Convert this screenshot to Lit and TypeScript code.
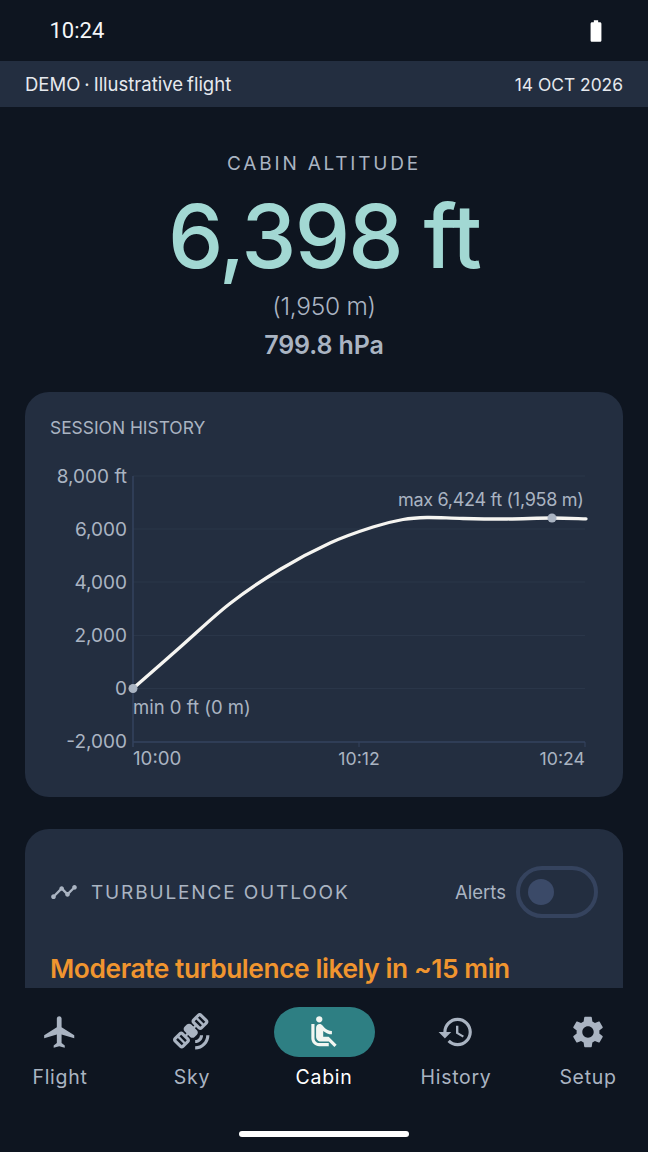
import { LitElement, html, css, svg } from "lit";
import { customElement } from "lit/decorators.js";

const ICONS: Record<string, string> = {
  flight: "M21 16v-2l-8-5V3.5c0-.83-.67-1.5-1.5-1.5S10 2.67 10 3.5V9l-8 5v2l8-2.5V19l-2 1.5V22l3.5-1 3.5 1v-1.5L13 19v-5.5l8 2.5z",
  sky: "M15.44.59l-3.18 3.18c-.78.78-.78 2.05 0 2.83l1.24 1.24-.71.71-1.24-1.25c-.78-.78-2.05-.78-2.83 0L7.3 8.72c-.78.78-.78 2.05 0 2.83l1.24 1.24-.71.71-1.23-1.25c-.78-.78-2.05-.78-2.83 0L.59 15.43c-.78.78-.78 2.05 0 2.83l3.54 3.54c.78.78 2.05.78 2.83 0l3.18-3.18c.78-.78.78-2.05 0-2.83L8.9 14.55l.71-.71 1.24 1.24c.78.78 2.05.78 2.83 0l1.41-1.41c.78-.78.78-2.05 0-2.83L13.84 9.6l.71-.71 1.24 1.24c.78.78 2.05.78 2.83 0l3.18-3.18c.78-.78.78-2.05 0-2.83L18.26.58c-.78-.78-2.04-.78-2.82.01zM6.6 19.32l-1.06 1.06L2 16.85l1.06-1.06 3.54 3.53zm2.12-2.12l-1.06 1.06-3.54-3.54 1.06-1.06 3.54 3.54zm9.54-9.54l-1.06 1.06-3.54-3.54 1.06-1.06 3.54 3.54zm2.12-2.12L19.32 6.6l-3.54-3.54L16.85 2l3.53 3.54zM14 21v2c4.97 0 9-4.03 9-9h-2c0 3.87-3.13 7-7 7zm0-4v2c2.76 0 5-2.24 5-5h-2c0 1.66-1.34 3-3 3z",
  cabin: "M7.59 5.41c-.78-.78-.78-2.05 0-2.83.78-.78 2.05-.78 2.83 0 .78.78.78 2.05 0 2.83-.79.79-2.05.79-2.83 0zM6 16V7H4v9c0 2.76 2.24 5 5 5h6v-2H9c-1.66 0-3-1.34-3-3zm14 4.07L14.93 15H11.5v-3.68c1.4 1.15 3.6 2.16 5.5 2.16v-2.16c-1.66.02-3.61-.87-4.67-2.04l-1.4-1.55c-.19-.21-.43-.38-.69-.5-.29-.14-.62-.23-.96-.23h-.03C8.01 7 7 8.01 7 9.25V15c0 1.66 1.34 3 3 3h5.07l3.5 3.5L20 20.07z",
  history: "M13 3c-4.97 0-9 4.03-9 9H1l3.89 3.89.07.14L9 12H6c0-3.87 3.13-7 7-7s7 3.13 7 7-3.13 7-7 7c-1.93 0-3.68-.79-4.94-2.06l-1.42 1.42C8.27 19.99 10.51 21 13 21c4.97 0 9-4.03 9-9s-4.03-9-9-9zm-1 5v5l4.28 2.54.72-1.21-3.5-2.08V8H12z",
  setup: "M19.14 12.94c.04-.3.06-.61.06-.94 0-.32-.02-.64-.07-.94l2.03-1.58c.18-.14.23-.41.12-.61l-1.92-3.32c-.12-.22-.37-.29-.59-.22l-2.39.96c-.5-.38-1.03-.7-1.62-.94l-.36-2.54c-.04-.24-.24-.41-.48-.41h-3.84c-.24 0-.43.17-.47.41l-.36 2.54c-.59.24-1.13.57-1.62.94l-2.39-.96c-.22-.08-.47 0-.59.22L2.74 8.87c-.12.21-.08.47.12.61l2.03 1.58c-.05.3-.09.63-.09.94s.02.64.07.94l-2.03 1.58c-.18.14-.23.41-.12.61l1.92 3.32c.12.22.37.29.59.22l2.39-.96c.5.38 1.03.7 1.62.94l.36 2.54c.05.24.24.41.48.41h3.84c.24 0 .44-.17.47-.41l.36-2.54c.59-.24 1.13-.56 1.62-.94l2.39.96c.22.08.47 0 .59-.22l1.92-3.32c.12-.22.07-.47-.12-.61l-2.01-1.58zM12 15.6c-1.98 0-3.6-1.62-3.6-3.6s1.62-3.6 3.6-3.6 3.6 1.62 3.6 3.6-1.62 3.6-3.6 3.6z",
  timeline: "M23 8c0 1.1-.9 2-2 2-.18 0-.35-.02-.51-.07l-3.56 3.55c.05.16.07.34.07.52 0 1.1-.9 2-2 2s-2-.9-2-2c0-.18.02-.36.07-.52l-2.55-2.55c-.16.05-.34.07-.52.07s-.36-.02-.52-.07l-4.55 4.56c.05.16.07.33.07.51 0 1.1-.9 2-2 2s-2-.9-2-2 .9-2 2-2c.18 0 .35.02.51.07l4.56-4.55C8.02 9.36 8 9.18 8 9c0-1.1.9-2 2-2s2 .9 2 2c0 .18-.02.36-.07.52l2.55 2.55c.16-.05.34-.07.52-.07s.36.02.52.07l3.55-3.56C19.02 8.35 19 8.18 19 8c0-1.1.9-2 2-2s2 .9 2 2z",
  battery: "M15.67 4H14V2h-4v2H8.33C7.6 4 7 4.6 7 5.33v15.33C7 21.4 7.6 22 8.33 22h7.33c.74 0 1.34-.6 1.34-1.33V5.33C17 4.6 16.4 4 15.67 4z",
};

const icon = (n: string, cls = "") =>
  html`<svg class=${cls} viewBox="0 0 24 24" fill="currentColor"><path d=${ICONS[n]}></path></svg>`;

const NAV = [
  { k: "flight", l: "Flight" },
  { k: "sky", l: "Sky" },
  { k: "cabin", l: "Cabin", active: true },
  { k: "history", l: "History" },
  { k: "setup", l: "Setup" },
];

const GRID = [16, 69, 122, 175.5, 228.5];
const YL: [string, number][] = [
  ["8,000 ft", 22.5],
  ["6,000", 75.5],
  ["4,000", 128.5],
  ["2,000", 182],
  ["0", 235],
  ["-2,000", 288],
];

const CURVE: [number, number][] = [
  [108, 228.5], [157, 185.5], [205, 143.5], [255, 109.5], [305, 83], [348, 67],
  [378, 59.5], [402, 57.5], [438, 58.5], [482, 59], [527, 58], [561, 58.8],
];

function smooth(p: [number, number][]): string {
  let d = `M${p[0][0]} ${p[0][1]}`;
  for (let i = 0; i < p.length - 1; i++) {
    const a = p[Math.max(0, i - 1)], b = p[i], c = p[i + 1], e = p[Math.min(p.length - 1, i + 2)];
    const c1x = b[0] + (c[0] - a[0]) / 6, c1y = b[1] + (c[1] - a[1]) / 6;
    const c2x = c[0] - (e[0] - b[0]) / 6, c2y = c[1] - (e[1] - b[1]) / 6;
    d += ` C${c1x.toFixed(1)} ${c1y.toFixed(1)} ${c2x.toFixed(1)} ${c2y.toFixed(1)} ${c[0]} ${c[1]}`;
  }
  return d;
}

@customElement("app-root")
export class AppRoot extends LitElement {
  static styles = css`
    :host { display: block; width: 648px; height: 1152px; background: #0e1520; overflow: hidden;
      font-family: Inter, "Open Sans", sans-serif; color: #fff; }
    .shell { display: flex; flex-direction: column; height: 1152px; }
    .status { height: 61px; flex: none; display: flex; align-items: center; justify-content: space-between;
      padding: 0 39px 0 49.5px; font-family: Roboto, sans-serif; font-size: 22px; color: #f4f6f8; box-sizing: border-box; }
    .batt { width: 26px; height: 26px; color: #fff; display: block; }
    .banner { height: 46px; flex: none; background: #232e40; display: flex; align-items: center; justify-content: space-between;
      padding: 0 25px; font-size: 18.5px; word-spacing: -1.2px; color: #e6e9ee; box-sizing: border-box; }
    .banner .date { font-size: 17.4px; word-spacing: 0; }
    .main { flex: 1; min-height: 0; overflow: hidden; padding: 0 25px; box-sizing: border-box; }
    .hero { display: flex; flex-direction: column; align-items: center; padding-top: 45px; height: 285px; box-sizing: border-box; }
    .hero .lab { font-size: 19px; letter-spacing: 2.8px; color: #aab4c2; line-height: 24px; }
    .hero .val { font-size: 88px; font-weight: 500; color: #a2d8d3; line-height: 96px; margin-top: 12px; letter-spacing: -1.8px; }
    .hero .m { font-size: 24.5px; color: #aab4c2; font-weight: 300; letter-spacing: -0.3px; line-height: 30px; margin-top: 7px; }
    .hero .hpa { font-size: 25px; color: #aab4c2; font-weight: 600; letter-spacing: -0.1px; line-height: 32px; margin-top: 8px; }
    .card { background: #232e40; border-radius: 24px; box-sizing: border-box; }
    .chart { height: 405px; padding: 25px 0 0; }
    .chart h3 { margin: 0 0 0 25px; font-size: 17.4px; font-weight: 400; color: #aab4c2; line-height: 22px; }
    .chart svg { display: block; margin-top: 21px; }
    .chart text { font-family: Inter, sans-serif; fill: #aab4c2; }
    .chart .yl { font-size: 19px; }
    .chart .tl { font-size: 18.7px; }
    .chart .tn { font-size: 17.7px; }
    .chart .mn { font-size: 18.5px; }
    .chart .mx { font-size: 18px; letter-spacing: -0.3px; }
    .turb { margin-top: 32px; height: 300px; padding: 37px 26px 0 25px; }
    .thead { display: flex; align-items: center; height: 52px; }
    .thead .ti { width: 28px; height: 28px; color: #aab4c2; margin-right: 13px; }
    .thead .tt { font-size: 19px; letter-spacing: 1.85px; color: #aab4c2; flex: 1; }
    .thead .al { font-size: 18.5px; color: #aab4c2; margin-right: 10px; }
    .sw { width: 82px; height: 52px; border: 4px solid #35435e; border-radius: 26px; box-sizing: border-box; display: flex; align-items: center; padding-left: 8px; margin-right: -1px; }
    .sw i { width: 26px; height: 26px; border-radius: 50%; background: #3b4a68; display: block; }
    .warn { margin-top: 34px; font-size: 26.3px; font-weight: 600; color: #f0952f; letter-spacing: -0.4px; line-height: 34px; }
    .nav { flex: none; height: 164px; background: #0e1520; display: flex; flex-direction: column; }
    .items { display: flex; gap: 12px; padding-top: 19px; }
    .item { width: 120px; display: flex; flex-direction: column; align-items: center; color: #aab4c2; font-size: 19.5px; letter-spacing: 0.7px; }
    .pill { width: 101px; height: 50px; border-radius: 25px; display: flex; align-items: center; justify-content: center; }
    .pill svg { width: 38px; height: 38px; display: block; }
    .item.on { color: #fff; }
    .item.on .pill { background: #2e7f83; color: #f2f6f1; }
    .item span { margin-top: 8px; line-height: 24px; }
    .home { width: 170px; height: 6px; border-radius: 3px; background: #fff; margin: 42px auto 0; }
  `;

  private chart() {
    const x0 = 108, x1 = 560;
    return svg`
      ${GRID.map((y) => svg`<line x1=${x0} x2=${x1} y1=${y} y2=${y} stroke="#2a3649" stroke-width="1"></line>`)}
      <line x1=${x0} x2=${x0} y1="16" y2="287" stroke="#35435e" stroke-width="1.5"></line>
      <line x1=${x0} x2=${x1} y1="282" y2="282" stroke="#35435e" stroke-width="1.5"></line>
      <line x1="334" x2="334" y1="282" y2="287" stroke="#35435e"></line>
      <line x1=${x1} x2=${x1} y1="282" y2="287" stroke="#35435e"></line>
      ${YL.map(([t, y]) => svg`<text class="yl" x="102" y=${y} text-anchor="end">${t}</text>`)}
      <path d=${smooth(CURVE)} fill="none" stroke="#f6f5f1" stroke-width="3.3" stroke-linecap="round"></path>
      <circle cx="108" cy="228.5" r="4.5" fill="#aab4c2"></circle>
      <circle cx="527" cy="58" r="4.5" fill="#aab4c2"></circle>
      <text class="mx" x="558.5" y="46" text-anchor="end">max 6,424 ft (1,958 m)</text>
      <text class="mn" x="108" y="253.5">min 0 ft (0 m)</text>
      <text class="tl" x="108" y="305">10:00</text>
      <text class="tn" x="334" y="305" text-anchor="middle">10:12</text>
      <text class="tn" x="560" y="305" text-anchor="end">10:24</text>
    `;
  }

  render() {
    return html`<div class="shell">
      <div class="status"><span>10:24</span>${icon("battery", "batt")}</div>
      <div class="banner"><span>DEMO · Illustrative flight</span><span class="date">14 OCT 2026</span></div>
      <div class="main">
        <section class="hero">
          <div class="lab">CABIN ALTITUDE</div>
          <div class="val">6,398 ft</div>
          <div class="m">(1,950 m)</div>
          <div class="hpa">799.8 hPa</div>
        </section>
        <section class="card chart">
          <h3>SESSION HISTORY</h3>
          <svg width="598" height="320" viewBox="0 0 598 320">${this.chart()}</svg>
        </section>
        <section class="card turb">
          <div class="thead">
            ${icon("timeline", "ti")}
            <div class="tt">TURBULENCE OUTLOOK</div>
            <div class="al">Alerts</div>
            <div class="sw"><i></i></div>
          </div>
          <div class="warn">Moderate turbulence likely in ~15 min</div>
        </section>
      </div>
      <nav class="nav">
        <div class="items">
          ${NAV.map((n) => html`<div class="item ${n.active ? "on" : ""}">
            <div class="pill">${icon(n.k)}</div><span>${n.l}</span>
          </div>`)}
        </div>
        <div class="home"></div>
      </nav>
    </div>`;
  }
}
